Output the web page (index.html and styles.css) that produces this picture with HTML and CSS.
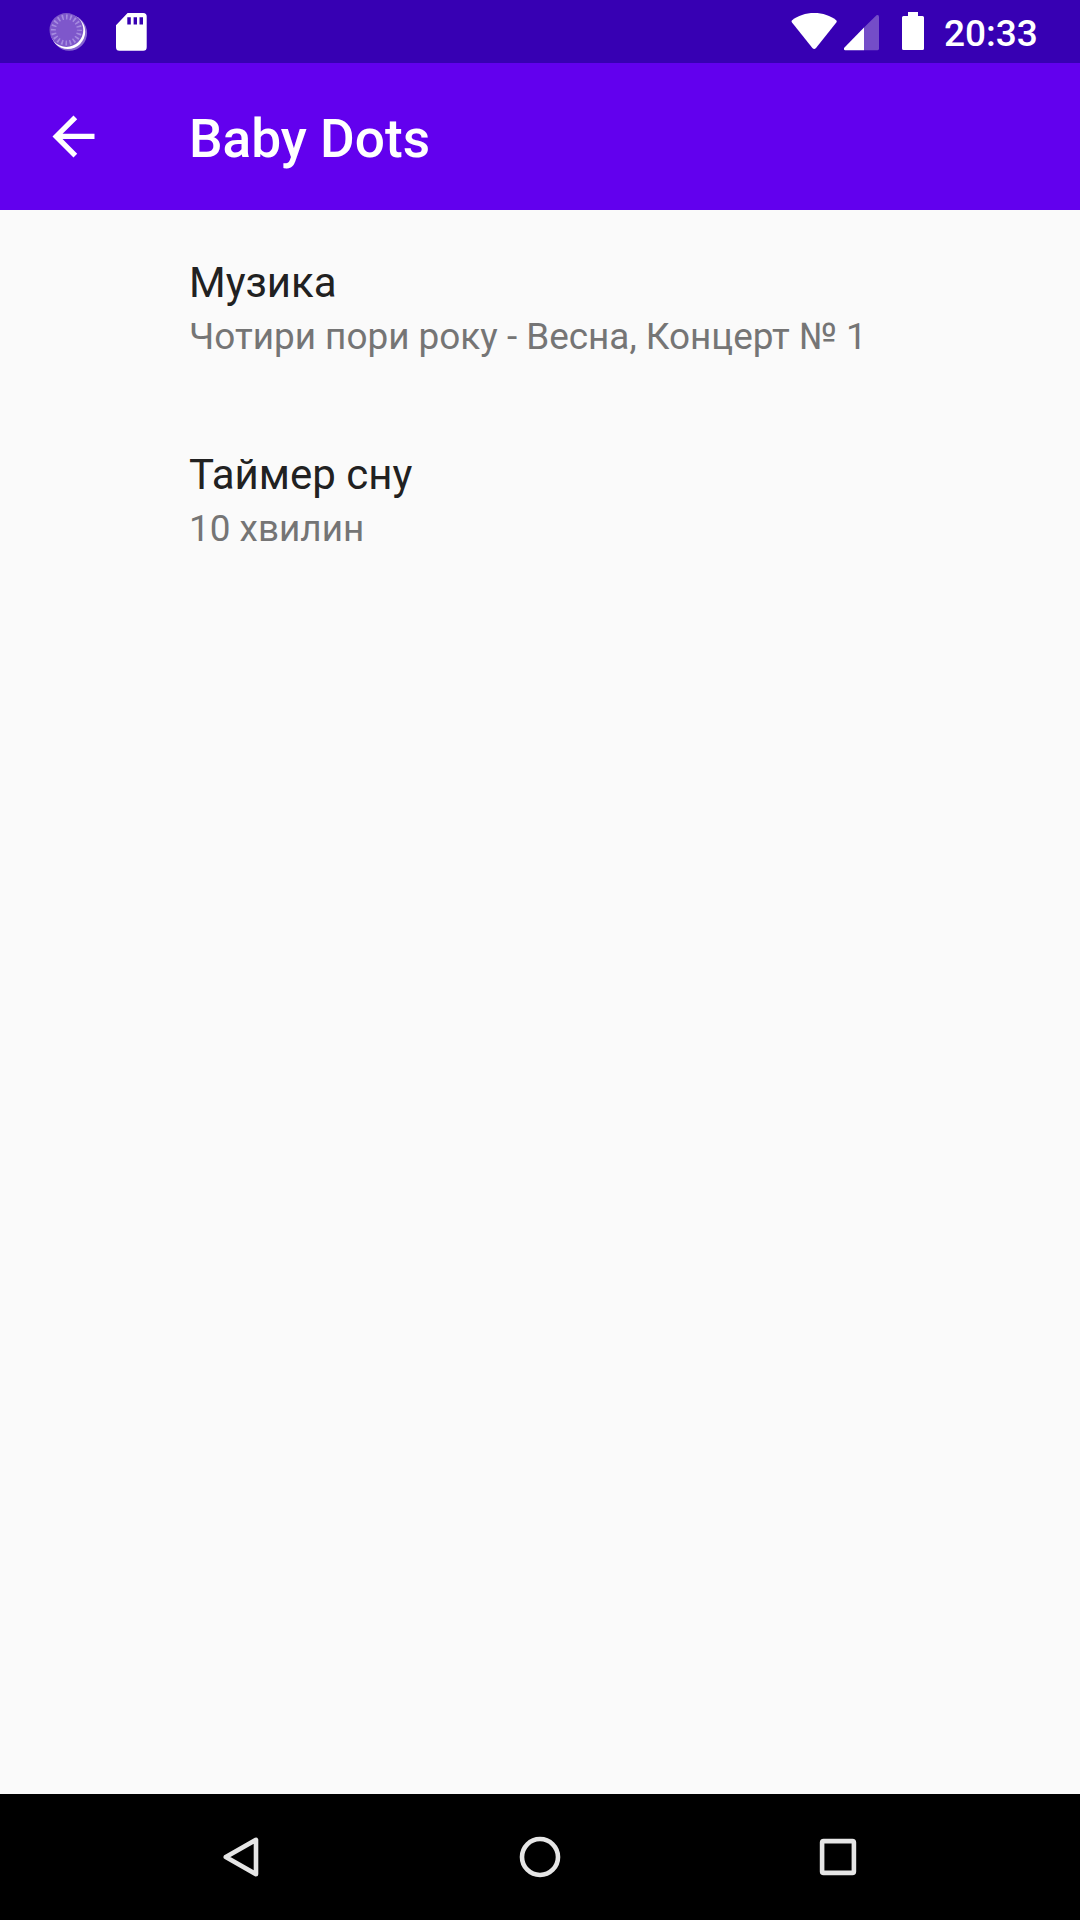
FILE: index.html
```html
<!DOCTYPE html>
<html lang="uk">
<head>
<meta charset="utf-8">
<title>Baby Dots</title>
<link rel="stylesheet" href="styles.css">
</head>
<body>
<div class="screen">
  <div class="status-bar">
    <svg class="icon-sync" width="42" height="42" viewBox="0 0 42 42">
      <circle cx="21.3" cy="21" r="17.800" fill="#fff" fill-opacity=".4"/>
      <circle cx="19.900" cy="19.700" r="17.300" fill="#fff"/>
      <circle cx="18.400" cy="18" r="16.900" fill="#7e57cb"/>
      <circle cx="18.400" cy="18" r="13" fill="none" stroke="#a68be0" stroke-width="5" stroke-dasharray="1.6 2.484" stroke-dashoffset=".8"/>
    </svg>
    <svg class="icon-sd" width="31" height="38" viewBox="0 0 31 38">
      <path fill="#fff" fill-rule="evenodd" d="M11.6 0H27.2a3.5 3.5 0 0 1 3.5 3.5V34.300a3.500 3.500 0 0 1-3.500 3.500H3.500A3.500 3.500 0 0 1 0 34.300V12.200zM11.300 4.200V11.500H14.800V4.200zM17.600 4.200V11.500H21V4.200zM23.500 4.200V11.500H27V4.200z"/>
    </svg>
    <svg class="icon-wifi" width="46" height="37" viewBox="-.3 0 46 37">
      <path fill="#fff" d="M22.900 0C14.300 0 6.500 2.700.8 7.200Q-.2 8.300.7 9.500L21.100 35.100Q22.900 37 24.700 35.100L45 9.500Q45.900 8.300 44.900 7.200C39.200 2.700 31.500 0 22.900 0z"/>
    </svg>
    <svg class="icon-signal" width="36" height="36" viewBox="0 0 36 36">
      <path fill="#fff" d="M20 12.600V35.200H1.200Q-.6 35-.1 33z"/>
      <path fill="#744dc8" d="M20 12.600L32.500.300Q35-.7 35 2V33.800Q35 35.200 33.600 35.200H20z"/>
    </svg>
    <svg class="icon-battery" width="22" height="38" viewBox="0 0 22 38">
      <path fill="#fff" d="M6 0H16V4H20.500Q22 4 22 5.500V36.500Q22 38 20.500 38H1.500Q0 38 0 36.500V5.500Q0 4 1.500 4H6z"/>
    </svg>
    <span class="clock">20:33</span>
  </div>
  <header class="app-bar">
    <svg class="icon-back" width="43" height="43" viewBox="3.810 3.810 16.381 16.381">
      <path fill="#fff" d="M20 11H7.830l5.590-5.590L12 4l-8 8 8 8 1.410-1.410L7.830 13H20v-2z"/>
    </svg>
    <h1 class="title">Baby Dots</h1>
  </header>
  <main class="settings">
    <div class="preference">
      <div class="preference-title">Музика</div>
      <div class="preference-summary">Чотири пори року - Весна, Концерт № 1</div>
    </div>
    <div class="preference">
      <div class="preference-title">Таймер сну</div>
      <div class="preference-summary">10 хвилин</div>
    </div>
  </main>
  <nav class="nav-bar">
    <svg width="42" height="42" viewBox="0 0 42 42"><path d="M4.800 21L35 3.800V38.200z"/></svg>
    <svg width="42" height="42" viewBox="0 0 42 42"><circle cx="21" cy="21" r="18"/></svg>
    <svg width="42" height="42" viewBox="0 0 42 42"><rect x="5.100" y="5.100" width="31.800" height="31.800" rx="1.500"/></svg>
  </nav>
</div>
</body>
</html>
```
FILE: styles.css
```css
* {
  box-sizing: border-box;
}

body {
  margin: 0;
  font-family: Roboto, sans-serif;
}

.screen {
  display: flex;
  flex-direction: column;
  width: 1080px;
  height: 1920px;
  background: #fafafa;
}

.status-bar {
  display: flex;
  align-items: flex-start;
  height: 63px;
  padding: 12px 0 0 48px;
  background: #3700b3;
}

.icon-sd {
  margin: 1px 0 0 26px;
}

.icon-wifi {
  margin: 1px 0 0 644px;
}

.icon-signal {
  margin: 3px 0 0 7px;
}

.icon-battery {
  margin-left: 22px;
}

.clock {
  margin-left: 20px;
  color: #fff;
  font-size: 37px;
  font-weight: 500;
  line-height: 43px;
}

.app-bar {
  display: flex;
  align-items: center;
  height: 147px;
  padding-left: 52px;
  background: #6200ee;
}

.title {
  margin: 4px 0 0 94px;
  color: #fff;
  font-size: 53.200px;
  font-weight: 500;
  line-height: 62px;
}

.settings {
  flex: 1;
}

.preference {
  height: 192px;
  padding: 48px 42px 0 189px;
}

.preference-title {
  color: #212121;
  font-size: 42px;
  line-height: 50px;
}

.preference-summary {
  margin-top: 7px;
  color: #757575;
  font-size: 36.900px;
  line-height: 43px;
}

.nav-bar {
  display: flex;
  justify-content: center;
  align-items: center;
  gap: 256px;
  height: 126px;
  background: #000;
}

.nav-bar svg {
  fill: none;
  stroke: #e6e6e6;
  stroke-width: 4.600;
  stroke-linejoin: round;
}
```
